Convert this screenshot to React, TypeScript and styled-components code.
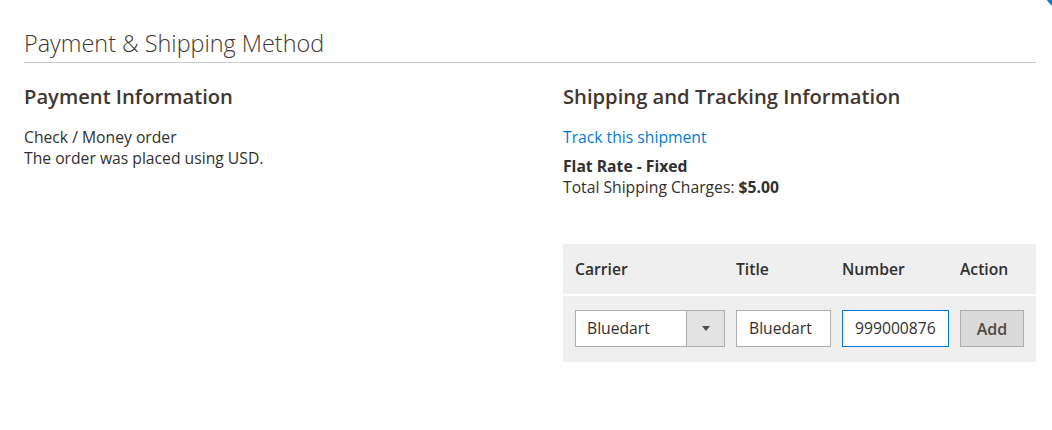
import React from 'react';
import styled, { createGlobalStyle } from 'styled-components';

const GlobalStyle = createGlobalStyle`
  html, body {
    margin: 0;
    padding: 0;
    background: #fff;
  }
  body {
    font-family: 'Open Sans', 'Noto Sans', 'Liberation Sans', sans-serif;
    color: #303030;
    font-size: 15.7px;
    line-height: 21px;
    overflow: hidden;
  }
`;

const Page = styled.div`
  position: relative;
  width: 1052px;
  height: 430px;
  padding: 28px 16px 0 24px;
  box-sizing: border-box;
  overflow: hidden;
`;

const CornerBlob = styled.div`
  position: absolute;
  left: 1040px;
  top: -55px;
  width: 69px;
  height: 69px;
  border-radius: 50%;
  background: #1979c3;
`;

const SectionTitle = styled.h2`
  margin: 0;
  padding-bottom: 4px;
  border-bottom: 1px solid #cccccc;
  font-size: 23.4px;
  line-height: 30px;
  font-weight: 300;
  color: #41362f;
`;

const Columns = styled.div`
  display: grid;
  grid-template-columns: 473px 473px;
  column-gap: 66px;
  padding-top: 21px;
`;

const Column = styled.div`
  display: flex;
  flex-direction: column;
`;

const ItemTitle = styled.h3`
  margin: 0 0 19px;
  font-size: 20.2px;
  line-height: 24px;
  font-weight: 600;
  color: #41362f;
`;

const Text = styled.div`
  margin: 0;
`;

const TrackLink = styled.a`
  color: #007bdb;
  text-decoration: none;
  cursor: pointer;
  margin-bottom: 8px;
`;

const Strong = styled.strong`
  font-weight: 700;
`;

const TrackingTable = styled.div`
  margin-top: 46px;
  background: #efefef;
`;

const Row = styled.div<{ $head?: boolean }>`
  display: grid;
  grid-template-columns: 150px 95px 107px 64px;
  column-gap: 11px;
  align-items: center;
  padding: ${p => (p.$head ? '0 12px' : '14px 12px 15px')};
  height: ${p => (p.$head ? '50px' : 'auto')};
  border-bottom: ${p => (p.$head ? '2px solid #ffffff' : 'none')};
`;

const HeadCell = styled.div`
  font-weight: 600;
  color: #303030;
`;

const SelectBox = styled.div`
  display: flex;
  height: 37px;
  box-sizing: border-box;
  border: 1px solid #adadad;
  background: #fff;
`;

const SelectValue = styled.div`
  flex: 1;
  padding-left: 11px;
  line-height: 35px;
  color: #303030;
`;

const SelectArrow = styled.div`
  width: 37px;
  border-left: 1px solid #adadad;
  background: #e3e3e3;
  display: flex;
  align-items: center;
  justify-content: center;

  &::after {
    content: '';
    border-left: 4px solid transparent;
    border-right: 4px solid transparent;
    border-top: 5px solid #514943;
  }
`;

const TextInput = styled.div<{ $focus?: boolean }>`
  height: 37px;
  box-sizing: border-box;
  border: 1px solid ${p => (p.$focus ? '#007bdb' : '#adadad')};
  background: #fff;
  padding-left: 12px;
  line-height: 35px;
  color: #303030;
  overflow: hidden;
  white-space: nowrap;
`;

const AddButton = styled.button`
  height: 37px;
  box-sizing: border-box;
  border: 1px solid #adadad;
  background: #dadada;
  color: #514943;
  font-family: inherit;
  font-size: 16px;
  font-weight: 600;
  padding: 0;
`;

export default function App() {
  return (
    <>
      <GlobalStyle />
      <Page>
        <CornerBlob />
        <SectionTitle>Payment &amp; Shipping Method</SectionTitle>
        <Columns>
          <Column>
            <ItemTitle>Payment Information</ItemTitle>
            <Text>Check / Money order</Text>
            <Text>The order was placed using USD.</Text>
          </Column>
          <Column>
            <ItemTitle>Shipping and Tracking Information</ItemTitle>
            <TrackLink>Track this shipment</TrackLink>
            <Text>
              <Strong>Flat Rate - Fixed</Strong>
            </Text>
            <Text>
              Total Shipping Charges: <Strong>$5.00</Strong>
            </Text>
            <TrackingTable>
              <Row $head>
                <HeadCell>Carrier</HeadCell>
                <HeadCell>Title</HeadCell>
                <HeadCell>Number</HeadCell>
                <HeadCell>Action</HeadCell>
              </Row>
              <Row>
                <SelectBox>
                  <SelectValue>Bluedart</SelectValue>
                  <SelectArrow />
                </SelectBox>
                <TextInput>Bluedart</TextInput>
                <TextInput $focus>999000876</TextInput>
                <AddButton>Add</AddButton>
              </Row>
            </TrackingTable>
          </Column>
        </Columns>
      </Page>
    </>
  );
}
